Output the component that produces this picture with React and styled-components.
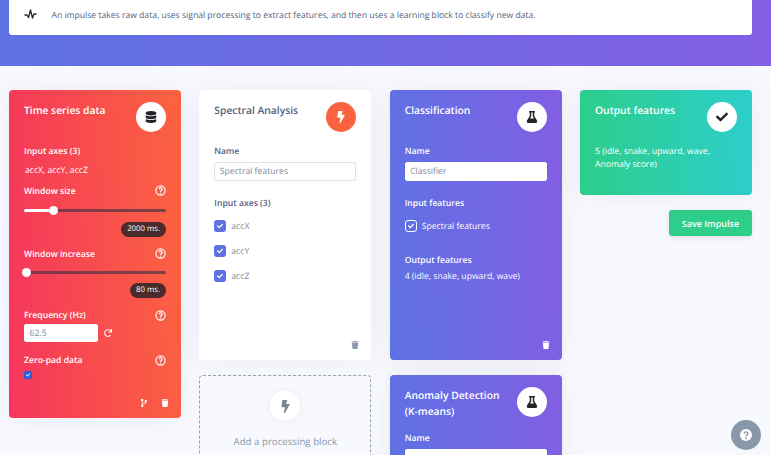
import React from "react";
import styled, { createGlobalStyle } from "styled-components";
import { FaDatabase, FaBolt, FaFlask, FaCheck, FaTrash, FaCodeBranch, FaRedo } from "react-icons/fa";

const Global = createGlobalStyle`
  html, body { margin: 0; padding: 0; height: 455px; overflow: hidden; background: #f8f9fe; }
  body { font-family: "Open Sans", "Noto Sans", sans-serif; color: #525f7f; text-rendering: geometricPrecision; }
  * { box-sizing: border-box; }
`;

const Page = styled.div`width: 771px; height: 455px; overflow: hidden; position: relative;`;
const Banner = styled.div`
  height: 66px;
  padding: 0 19px 0 9px;
  background: linear-gradient(87deg, #5e72e4 0%, #825ee4 100%);
`;
const Intro = styled.div`
  height: 35px;
  background: #fff;
  border-radius: 0 0 3px 3px;
  display: flex;
  align-items: center;
  padding: 0 0 5px 15px;
  gap: 14.5px;
  font-size: 8.6px;
  color: #525f7f;
`;
const Grid = styled.div`
  display: grid;
  grid-template-columns: repeat(4, 172px);
  column-gap: 18.33px;
  padding: 24px 0 0 9px;
  align-items: start;
`;
const Column = styled.div`display: flex; flex-direction: column; gap: 15px;`;
const gradients = {
  red: "linear-gradient(87deg, #f5365c 0%, #fb6340 100%)",
  purple: "linear-gradient(87deg, #5e72e4 0%, #825ee4 100%)",
  green: "linear-gradient(87deg, #2dce89 0%, #2dcecc 100%)",
  white: "#fff",
};
const Card = styled.section`
  position: relative;
  height: ${(p) => p.$h}px;
  padding: 12px 15px 10.5px;
  border-radius: 4px;
  background: ${(p) => gradients[p.$tone]};
  color: ${(p) => (p.$tone === "white" ? "#525f7f" : "#fff")};
  box-shadow: 0 0 24px rgba(136, 152, 170, 0.12);
  display: flex;
  flex-direction: column;
`;
const Head = styled.div`display: flex; justify-content: space-between; align-items: flex-start; min-height: 40px;`;
const Title = styled.h3`
  margin: 1px 0 0;
  font-size: 10.3px;
  font-weight: 600;
  line-height: 16px;
  color: inherit;
`;
const Circle = styled.div`
  width: 30px;
  height: 30px;
  border-radius: 50%;
  flex: none;
  display: flex;
  align-items: center;
  justify-content: center;
  background: ${(p) => p.$bg || "#fff"};
  color: ${(p) => p.$fg || "#212529"};
  font-size: ${(p) => p.$size || 12}px;
  box-shadow: ${(p) => (p.$raised ? "0 0 12px rgba(136,152,170,.12)" : "none")};
`;
const LabelRow = styled.div`
  display: flex;
  justify-content: space-between;
  align-items: center;
  height: 14px;
  margin-top: ${(p) => p.$mt || 0}px;
`;
const Label = styled.div`
  font-size: 8.65px;
  font-weight: 600;
  line-height: 14px;
  margin-top: ${(p) => p.$mt || 0}px;
`;
const Text = styled.div`
  font-size: 8.65px;
  line-height: 13.5px;
  margin-top: ${(p) => p.$mt || 0}px;
  margin-left: ${(p) => p.$ml || 0}px;
`;
const Help = styled.svg`width: 11px; height: 11px; flex: none;`;
const HelpIcon = () => (
  <Help viewBox="0 0 24 24" fill="none" stroke="#fff" strokeWidth="2.6">
    <circle cx="12" cy="12" r="10" />
    <path d="M8.8 9.4a3.3 3.3 0 1 1 4.9 2.9c-1.1.6-1.7 1.2-1.7 2.4" strokeWidth="2.6" />
    <path d="M12 16.6v2.4" strokeWidth="2.8" />
  </Help>
);
const Track = styled.div`
  position: relative;
  height: 3px;
  border-radius: 2px;
  margin-top: ${(p) => p.$mt}px;
  background: rgba(60, 50, 70, 0.65);
`;
const Fill = styled.div`height: 100%; border-radius: 2px; background: #fff;`;
const Thumb = styled.div`
  position: absolute;
  top: -3px;
  width: 9px;
  height: 9px;
  margin-left: -4.5px;
  border-radius: 50%;
  background: #fff;
`;
const PillRow = styled.div`display: flex; justify-content: flex-end; margin-top: ${(p) => p.$mt}px;`;
const Pill = styled.div`
  height: 15px;
  padding: 0 6px;
  border-radius: 7.5px;
  background: #4a2b2b;
  color: #fff;
  font-size: 7.8px;
  line-height: 15px;
`;
const Input = styled.div`
  height: 18.5px;
  width: ${(p) => p.$w || "100%"};
  background: #fff;
  border: 1px solid ${(p) => (p.$outline ? "#dee2e6" : "#fff")};
  border-radius: 2px;
  padding: 0 4.5px;
  font-size: 8.65px;
  line-height: 17.5px;
  color: #7f8a9c;
  margin-top: ${(p) => p.$mt || 0}px;
`;
const FreqRow = styled.div`display: flex; align-items: center; gap: 6px; margin-top: 1.5px; font-size: 8px;`;
const Box = styled.span`
  display: inline-flex;
  align-items: center;
  justify-content: center;
  flex: none;
  width: ${(p) => p.$s}px;
  height: ${(p) => p.$s}px;
  border-radius: ${(p) => (p.$s < 10 ? 1.5 : 3)}px;
  background: ${(p) => p.$bg};
  border: ${(p) => (p.$line ? "1px solid #fff" : "none")};
  color: #fff;
  font-size: ${(p) => p.$s * 0.5}px;
`;
const CheckRow = styled.div`
  display: flex;
  align-items: center;
  gap: 5px;
  height: 13px;
  margin-top: ${(p) => p.$mt || 0}px;
  font-size: 8.65px;
  color: ${(p) => (p.$muted ? "#7f8a9c" : "inherit")};
`;
const CardFoot = styled.div`
  margin: auto -3px 0 0;
  display: flex;
  justify-content: flex-end;
  gap: 13px;
  align-items: center;
  height: 10px;
  font-size: 8px;
  color: ${(p) => p.$c || "#fff"};
`;
const Dashed = styled.div`
  height: 130px;
  border: 1px dashed #9aa3b2;
  border-radius: 4px;
  padding-top: 15px;
  display: flex;
  flex-direction: column;
  align-items: center;
`;
const AddText = styled.div`margin-top: 14px; font-size: 9.7px; color: #8898aa;`;
const SaveRow = styled.div`display: flex; justify-content: flex-end;`;
const Save = styled.button`
  width: 83px;
  height: 26px;
  border: 0;
  border-radius: 3px;
  padding: 0;
  background: #2dce89;
  color: #fff;
  font: 600 9px "Open Sans", sans-serif;
  box-shadow: 0 2px 5px rgba(50, 50, 93, 0.12);
`;
const Float = styled.div`
  position: absolute;
  left: 731px;
  top: 420px;
  width: 30px;
  height: 30px;
  border-radius: 50%;
  background: #8898aa;
  display: flex;
  align-items: center;
  justify-content: center;
`;
const Pulse = styled.svg`width: 13px; height: 11px; flex: none; margin-top: -1px;`;

export default function App() {
  return (
    <Page>
      <Global />
      <Banner>
        <Intro>
          <Pulse viewBox="0 0 26 22" fill="none" stroke="#212529" strokeWidth="2.6" strokeLinejoin="round">
            <path d="M1 12h5l3 5 4-15 4 16 3-8h5" />
          </Pulse>
          An impulse takes raw data, uses signal processing to extract features, and then uses a learning block to classify new data.
        </Intro>
      </Banner>
      <Grid>
        <Column>
          <Card $tone="red" $h={328}>
            <Head>
              <Title>Time series data</Title>
              <Circle><FaDatabase /></Circle>
            </Head>
            <Label $mt={2}>Input axes (3)</Label>
            <Text $mt={5.5} $ml={1}>accX, accY, accZ</Text>
            <LabelRow $mt={6.5}><Label>Window size</Label><HelpIcon /></LabelRow>
            <Track $mt={11}>
              <Fill style={{ width: "21%" }} />
              <Thumb style={{ left: "21%" }} />
            </Track>
            <PillRow $mt={10}><Pill>2000 ms.</Pill></PillRow>
            <LabelRow $mt={10}><Label>Window increase</Label><HelpIcon /></LabelRow>
            <Track $mt={10}>
              <Thumb style={{ left: "2%" }} />
            </Track>
            <PillRow $mt={9.5}><Pill>80 ms.</Pill></PillRow>
            <LabelRow $mt={10}><Label>Frequency (Hz)</Label><HelpIcon /></LabelRow>
            <FreqRow>
              <Input $w="74px">62.5</Input>
              <FaRedo />
            </FreqRow>
            <LabelRow $mt={11}><Label>Zero-pad data</Label><HelpIcon /></LabelRow>
            <CheckRow $mt={1}><Box $s={8} $bg="#2f5fd8"><FaCheck /></Box></CheckRow>
            <CardFoot>
              <FaCodeBranch />
              <FaTrash />
            </CardFoot>
          </Card>
        </Column>
        <Column>
          <Card $tone="white" $h={270}>
            <Head>
              <Title>Spectral Analysis</Title>
              <Circle $bg="#fb6340" $fg="#fff"><FaBolt /></Circle>
            </Head>
            <Label $mt={2}>Name</Label>
            <Input $outline $mt={4}>Spectral features</Input>
            <Label $mt={15}>Input axes (3)</Label>
            <CheckRow $muted $mt={10}><Box $s={12} $bg="#5e72e4"><FaCheck /></Box><span>accX</span></CheckRow>
            <CheckRow $muted $mt={12}><Box $s={12} $bg="#5e72e4"><FaCheck /></Box><span>accY</span></CheckRow>
            <CheckRow $muted $mt={11.5}><Box $s={12} $bg="#5e72e4"><FaCheck /></Box><span>accZ</span></CheckRow>
            <CardFoot $c="#8898aa"><FaTrash /></CardFoot>
          </Card>
          <Dashed>
            <Circle $raised $bg="#fff" $fg="#7a8594" $size={13}><FaBolt /></Circle>
            <AddText>Add a processing block</AddText>
          </Dashed>
        </Column>
        <Column>
          <Card $tone="purple" $h={270}>
            <Head>
              <Title>Classification</Title>
              <Circle><FaFlask /></Circle>
            </Head>
            <Label $mt={2}>Name</Label>
            <Input $mt={4}>Classifier</Input>
            <Label $mt={15}>Input features</Label>
            <CheckRow $mt={10}><Box $s={12} $line $bg="transparent"><FaCheck /></Box><span>Spectral features</span></CheckRow>
            <Label $mt={20}>Output features</Label>
            <Text $mt={3.5}>4 (idle, snake, upward, wave)</Text>
            <CardFoot><FaTrash /></CardFoot>
          </Card>
          <Card $tone="purple" $h={130}>
            <Head>
              <Title>Anomaly Detection<br />(K-means)</Title>
              <Circle><FaFlask /></Circle>
            </Head>
            <Label $mt={4}>Name</Label>
            <Input $mt={4} />
          </Card>
        </Column>
        <Column>
          <Card $tone="green" $h={105}>
            <Head>
              <Title>Output features</Title>
              <Circle><FaCheck /></Circle>
            </Head>
            <Text $mt={2.5}>5 (idle, snake, upward, wave, Anomaly score)</Text>
          </Card>
          <SaveRow><Save>Save Impulse</Save></SaveRow>
        </Column>
      </Grid>
      <Float>
        <svg width="12" height="12" viewBox="0 0 24 24">
          <circle cx="12" cy="12" r="12" fill="#fff" />
          <path d="M8.4 9.4a3.6 3.6 0 1 1 5.4 3.1c-1.2.7-1.8 1.2-1.8 2.5" fill="none" stroke="#8898aa" strokeWidth="2.8" />
          <path d="M12 17v3" stroke="#8898aa" strokeWidth="3" />
        </svg>
      </Float>
    </Page>
  );
}
